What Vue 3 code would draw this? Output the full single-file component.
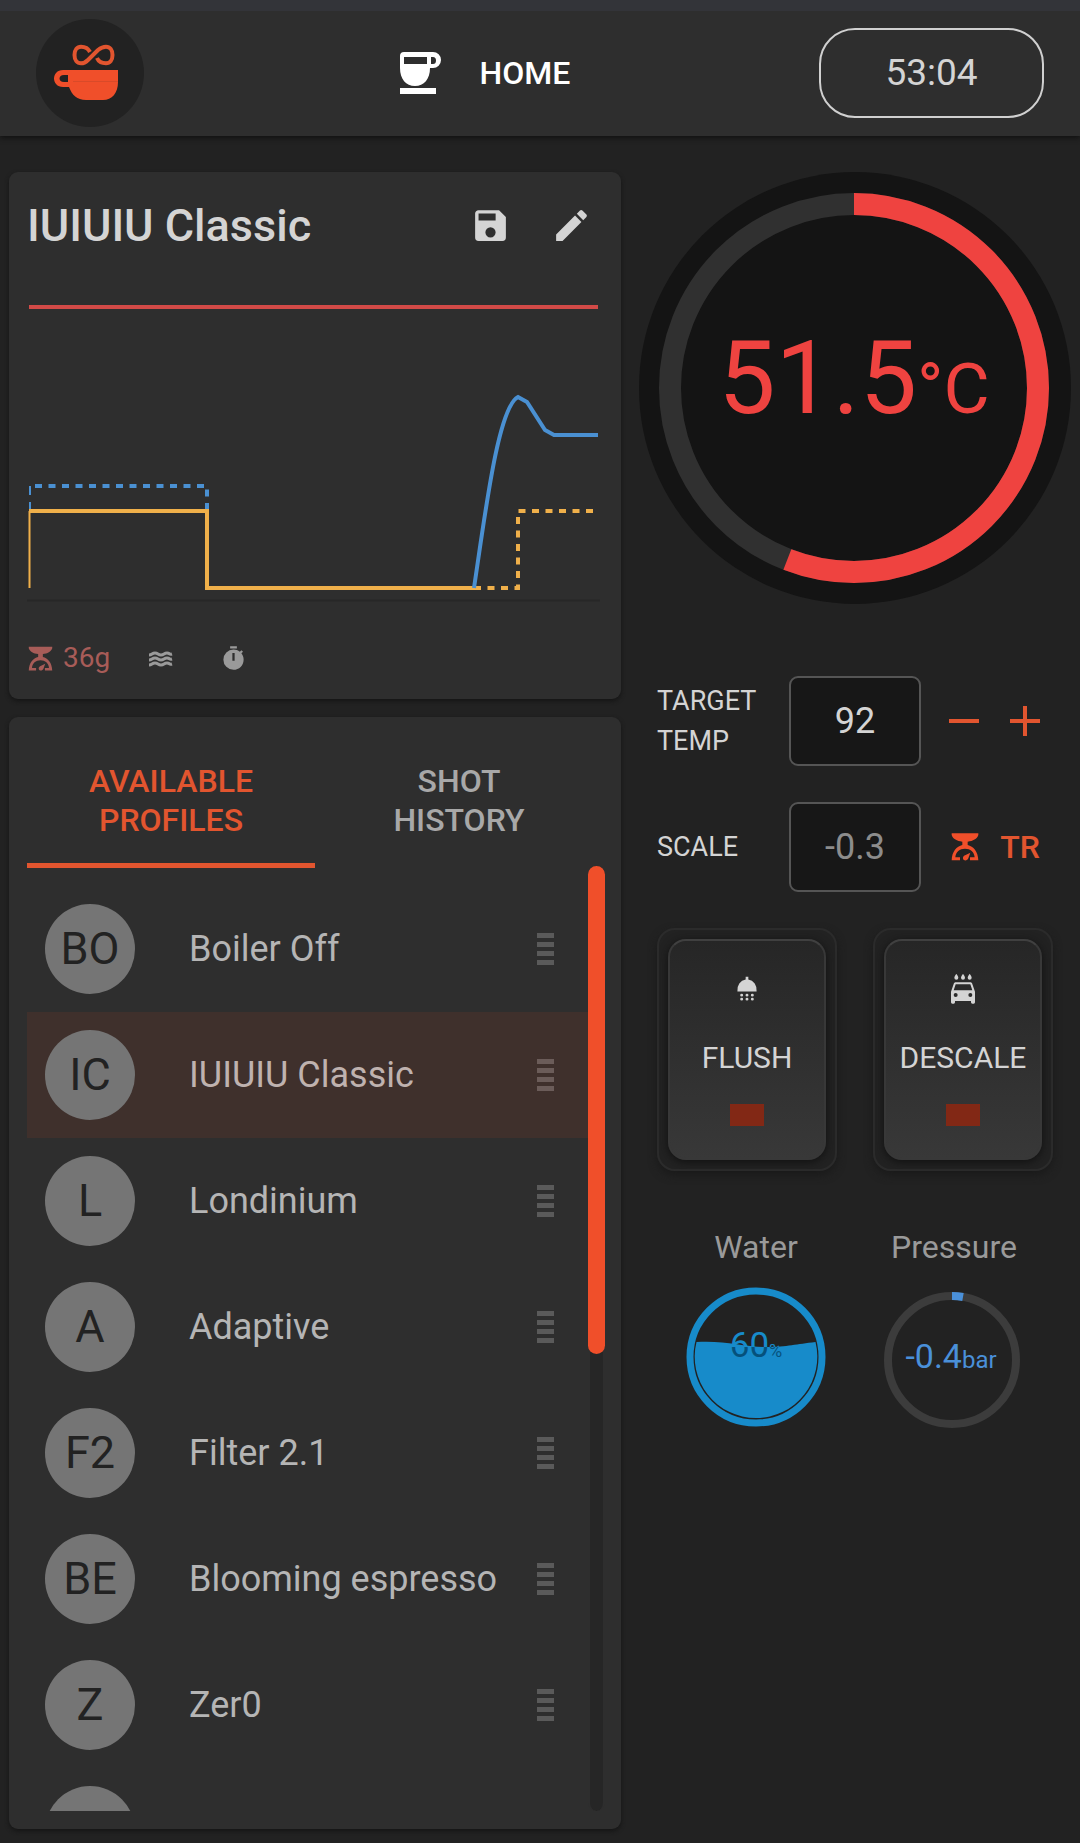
<script setup>
import { ref } from 'vue'

const targetTemp = ref(92)
const scaleWeight = ref('-0.3')
const selected = ref('IUIUIU Classic')

const profiles = [
  { initials: 'BO', name: 'Boiler Off' },
  { initials: 'IC', name: 'IUIUIU Classic' },
  { initials: 'L', name: 'Londinium' },
  { initials: 'A', name: 'Adaptive' },
  { initials: 'F2', name: 'Filter 2.1' },
  { initials: 'BE', name: 'Blooming espresso' },
  { initials: 'Z', name: 'Zer0' },
  { initials: '', name: '' }
]

const carWash =
  'M17,5A1.5,1.5 0 0,0 18.5,3.5C18.5,2.5 17,0.8 17,0.8C17,0.8 15.5,2.5 15.5,3.5A1.5,1.5 0 0,0 17,5M12,5A1.5,1.5 0 0,0 13.5,3.5C13.5,2.5 12,0.8 12,0.8C12,0.8 10.5,2.5 10.5,3.5A1.5,1.5 0 0,0 12,5M7,5A1.5,1.5 0 0,0 8.5,3.5C8.5,2.5 7,0.8 7,0.8C7,0.8 5.5,2.5 5.5,3.5A1.5,1.5 0 0,0 7,5M18.92,8C18.72,7.42 18.16,7 17.5,7H6.5C5.84,7 5.29,7.42 5.08,8L3,14V22A1,1 0 0,0 4,23H5A1,1 0 0,0 6,22V21H18V22A1,1 0 0,0 19,23H20A1,1 0 0,0 21,22V14L18.92,8M6.5,18A1.5,1.5 0 0,1 5,16.5A1.5,1.5 0 0,1 6.5,15A1.5,1.5 0 0,1 8,16.5A1.5,1.5 0 0,1 6.5,18M17.5,18A1.5,1.5 0 0,1 16,16.5A1.5,1.5 0 0,1 17.5,15A1.5,1.5 0 0,1 19,16.5A1.5,1.5 0 0,1 17.5,18M5,13L6.5,8.5H17.5L19,13H5Z'
const showerHead =
  'M11,2.8H13V4.8A7.2,8 0 0 1 19.2,13.8H4.8A7.2,8 0 0 1 11,4.8ZM6.9,16.6a1.1,1.1 0 1 0 2.2,0a1.1,1.1 0 1 0 -2.2,0M10.9,16.6a1.1,1.1 0 1 0 2.2,0a1.1,1.1 0 1 0 -2.2,0M14.9,16.6a1.1,1.1 0 1 0 2.2,0a1.1,1.1 0 1 0 -2.2,0M6.9,19.6a1.1,1.1 0 1 0 2.2,0a1.1,1.1 0 1 0 -2.2,0M10.9,19.6a1.1,1.1 0 1 0 2.2,0a1.1,1.1 0 1 0 -2.2,0M14.9,19.6a1.1,1.1 0 1 0 2.2,0a1.1,1.1 0 1 0 -2.2,0'
const scaleIcon =
  'M0,0H80V5C76,17 64,23 48,25V35C65,39 79,54 80,81H55V72H69C68,56 56,46 40,46C24,46 12,56 11,72H25V81H0C1,54 15,39 32,35V25C16,23 4,17 0,5ZM56,58L50,75C47,83 36,83 34,76C33,70 37,67 42,65Z'

const actions = [
  { label: 'FLUSH', icon: showerHead },
  { label: 'DESCALE', icon: carWash }
]
</script>

<template>
  <div class="page">
    <header class="bar">
      <div class="logo">
        <svg viewBox="0 0 108 108" aria-hidden="true">
          <path d="M54 33C52 29 48 27.700 45 27.700C41 27.700 38.500 31 38.500 36S41 44.300 45 44.300C48 44.300 50 43 52 41L62 31C64.500 29 67 27.700 70 27.700C74 27.700 76.500 31 76.500 36S74 44.300 70 44.300C66 44.300 62.500 42.500 61 39" fill="none" stroke="#e2552f" stroke-width="4" />
          <path fill="#f04f2a" fill-rule="evenodd" d="M27 51H82V63C82 74 76 81 67 81H50C41 81 36 76 33 68H27C15 68 15 51 27 51ZM28 56C22 56 22 63 28 63H32V56Z" />
          <path d="M37 62.500H82" stroke="#d94a29" stroke-width="1" />
        </svg>
      </div>
      <a class="home" href="#home">
        <svg viewBox="0 0 45 45" aria-hidden="true">
          <path fill="#fff" fill-rule="evenodd" d="M7 1H36A8 8 0 0 1 36 17H33C33 28 27 35 18 35S3 28 3 17V5Q3 1 7 1ZM7 6V13H30V6ZM34 6V13H36Q39 13 39 9.500T36 6Z" />
          <path fill="#fff" d="M3 37H39V43H3Z" />
        </svg>
        <span>HOME</span>
      </a>
      <div class="clock" role="timer">53:04</div>
    </header>

    <main class="columns">
      <div class="left">
        <section class="card profile">
          <div class="profile-head">
            <h1>IUIUIU Classic</h1>
            <button class="icon-button" aria-label="Save">
              <svg viewBox="0 0 24 24"><path d="M15,9H5V5H15M12,19A3,3 0 0,1 9,16A3,3 0 0,1 12,13A3,3 0 0,1 15,16A3,3 0 0,1 12,19M17,3H5C3.89,3 3,3.9 3,5V19A2,2 0 0,0 5,21H19A2,2 0 0,0 21,19V7L17,3Z" /></svg>
            </button>
            <button class="icon-button" aria-label="Edit">
              <svg viewBox="0 0 24 24"><path d="M20.71,7.04C21.1,6.65 21.1,6 20.71,5.63L18.37,3.29C18,2.9 17.35,2.9 16.96,3.29L15.12,5.12L18.87,8.87M3,17.25V21H6.75L17.81,9.93L14.06,6.18L3,17.25Z" /></svg>
            </button>
          </div>
          <svg class="chart" viewBox="0 0 576 340" aria-hidden="true">
            <g fill="none" stroke-width="4">
              <path d="M0 330.500H573" stroke="#272727" stroke-width="2" />
              <path d="M2 37H571" stroke="#d24a47" />
              <path d="M3 241V216" stroke="#4a90d2" stroke-width="2" stroke-dasharray="9 7" />
              <path d="M8 216H180V241" stroke="#4a90d2" stroke-dasharray="7 6.500" />
              <path d="M447 318H491V241H568" stroke="#f0b04a" stroke-dasharray="7 6.500" />
              <path d="M2.500 318V241" stroke="#f0b04a" stroke-width="2" />
              <path d="M2 241H180V318H449" stroke="#f0b04a" />
              <path d="M447 318C458 245 471 137 491 127L500 132L518 160L527 165H571" stroke="#4a90d2" />
            </g>
          </svg>
          <ul class="stops">
            <li class="weight">
              <svg viewBox="-6 -6 92 92" aria-hidden="true"><path :d="scaleIcon" /></svg>
              <span>36g</span>
            </li>
            <li>
              <svg viewBox="0 0 27 27" aria-hidden="true">
                <path v-for="y in [9, 14, 19]" :key="y" :d="`M2 ${y + 1}C5 ${y + 1} 5 ${y - 1} 8 ${y - 1}S11 ${y + 1} 14 ${y + 1}S17 ${y - 1} 20 ${y - 1}S22 ${y + 1} 25 ${y}`" fill="none" stroke="#9a9a9a" stroke-width="3" />
              </svg>
            </li>
            <li>
              <svg viewBox="0 0 24 24" aria-hidden="true"><path d="M19.03 7.39L20.45 5.97C20 5.46 19.55 5 19.04 4.56L17.62 6C16.07 4.74 14.12 4 12 4A9 9 0 0 0 3 13A9 9 0 0 0 12 22C17 22 21 17.97 21 13C21 10.88 20.26 8.93 19.03 7.39M13 14H11V7H13V14M15 1H9V3H15V1Z" /></svg>
            </li>
          </ul>
        </section>

        <section class="card browser">
          <div class="tabs" role="tablist">
            <button class="tab active" role="tab" aria-selected="true">AVAILABLE<br />PROFILES</button>
            <button class="tab" role="tab" aria-selected="false">SHOT<br />HISTORY</button>
          </div>
          <div class="scroller">
            <ul class="list">
              <li v-for="p in profiles" :key="p.name" :class="{ selected: p.name === selected }">
                <button class="row" @click="selected = p.name">
                  <span class="avatar">{{ p.initials }}</span>
                  <span class="name">{{ p.name }}</span>
                  <span class="grip"></span>
                </button>
              </li>
            </ul>
            <div class="track"><div class="thumb"></div></div>
          </div>
        </section>
      </div>

      <div class="right">
        <svg class="gauge" viewBox="0 0 432 432" role="img" aria-label="Temperature">
          <circle cx="216" cy="216" r="216" fill="#141414" />
          <circle cx="215" cy="216" r="184" fill="none" stroke="#303030" stroke-width="22" />
          <circle cx="215" cy="216" r="184" fill="none" stroke="#ef4340" stroke-width="22" pathLength="1000" stroke-dasharray="559 441" transform="rotate(-90 215 216)" />
          <text x="215" y="241" text-anchor="middle" font-size="102" fill="#ef4340">51.5<tspan font-size="71">°C</tspan></text>
        </svg>

        <div class="controls">
          <div class="control">
            <label for="target">TARGET TEMP</label>
            <input id="target" v-model="targetTemp" type="text" />
            <div class="buttons">
              <button aria-label="Decrease" @click="targetTemp--">
                <svg viewBox="0 0 30 30"><path d="M0 15H30" stroke="currentColor" stroke-width="4" /></svg>
              </button>
              <button aria-label="Increase" @click="targetTemp++">
                <svg viewBox="0 0 30 30"><path d="M0 15H30M15 0V30" stroke="currentColor" stroke-width="4" /></svg>
              </button>
            </div>
          </div>
          <div class="control">
            <label for="scale">SCALE</label>
            <input id="scale" class="dim" v-model="scaleWeight" type="text" readonly />
            <div class="buttons">
              <button aria-label="Scale">
                <svg viewBox="-8 -4 90 90"><path :d="scaleIcon" fill="#f04f2a" /></svg>
              </button>
              <button>TR</button>
            </div>
          </div>
        </div>

        <div class="switches">
          <div v-for="a in actions" :key="a.label" class="frame">
            <button class="switch">
              <svg viewBox="0 0 24 24" aria-hidden="true"><path :d="a.icon" /></svg>
              <span>{{ a.label }}</span>
              <i class="led"></i>
            </button>
          </div>
        </div>

        <div class="meters">
          <figure>
            <figcaption>Water</figcaption>
            <svg viewBox="0 0 144 144" role="img" aria-label="Water level">
              <defs>
                <linearGradient id="level" gradientUnits="userSpaceOnUse" x1="0" y1="0" x2="0" y2="144">
                  <stop offset="0.422" stop-color="#178bca" />
                  <stop offset="0.422" stop-color="#05517c" />
                </linearGradient>
              </defs>
              <circle cx="72" cy="71" r="66" fill="none" stroke="#178bca" stroke-width="7" />
              <path d="M12.500 56C40 54 60 61 82 61S112 58 131.500 56A61.300 61.300 0 1 1 12.500 56Z" fill="#178bca" />
              <text x="72" y="71" text-anchor="middle" font-size="35" fill="url(#level)">60<tspan font-size="18">%</tspan></text>
            </svg>
          </figure>
          <figure>
            <figcaption>Pressure</figcaption>
            <svg viewBox="0 0 144 144" role="img" aria-label="Pressure">
              <circle cx="70" cy="74" r="64" fill="none" stroke="#3c3c3c" stroke-width="8" />
              <path d="M70 10A64 64 0 0 1 81 11" fill="none" stroke="#4a90d9" stroke-width="8" />
              <text x="69" y="82" text-anchor="middle" font-size="34" fill="#4a90d9">-0.4<tspan font-size="24">bar</tspan></text>
            </svg>
          </figure>
        </div>
      </div>
    </main>
  </div>
</template>

<style>
body {
  margin: 0;
  background: #222;
}
</style>

<style scoped>
* {
  box-sizing: border-box;
}
.page {
  display: flex;
  flex-direction: column;
  height: 100vh;
  background: #222;
  color: #d4d4d4;
  font-family: Roboto, "Liberation Sans", sans-serif;
}
svg {
  display: block;
  fill: currentColor;
}
button {
  padding: 0;
  border: 0;
  background: none;
  color: inherit;
  font: inherit;
}
ul {
  margin: 0;
  padding: 0;
  list-style: none;
}
.bar {
  display: flex;
  justify-content: space-between;
  align-items: center;
  padding: 8px 36px 9px;
  border-top: 11px solid #333439;
  background: #2e2e2e;
  box-shadow: 0 2px 5px #111;
}
.logo {
  width: 108px;
  border-radius: 50%;
  background: #222;
}
.home {
  display: flex;
  align-items: center;
  gap: 38px;
  padding-left: 4px;
  color: #fff;
  font-size: 32px;
  font-weight: 500;
  text-decoration: none;
}
.home svg {
  width: 45px;
}
.clock {
  width: 225px;
  border: 2px solid #d0d0d0;
  border-radius: 36px;
  font-size: 37px;
  line-height: 86px;
  text-align: center;
}
.columns {
  display: grid;
  flex: 1;
  grid-template-columns: 7fr 5fr;
  min-height: 0;
  padding: 36px 0 14px;
}
.left {
  display: flex;
  flex-direction: column;
  gap: 18px;
  min-height: 0;
  padding: 0 9px;
}
.card {
  border-radius: 9px;
  background: #2e2e2e;
  box-shadow: 0 2px 4px #141414;
}
.profile-head {
  display: flex;
  align-items: center;
  padding: 13px 9px 4px 18px;
}
h1 {
  flex: 1;
  margin: 0;
  font-size: 45px;
  font-weight: 500;
}
.icon-button {
  display: grid;
  place-items: center;
  width: 81px;
  height: 81px;
}
.icon-button svg {
  width: 41px;
}
.chart {
  width: 100%;
  padding: 0 18px;
}
.stops {
  display: flex;
  gap: 37px;
  padding: 30px 18px 23px;
  color: #9a9a9a;
  font-size: 28px;
  line-height: 36px;
}
.stops li {
  display: flex;
  align-items: center;
  gap: 9px;
}
.stops li::after {
  content: "";
}
.stops .weight::after {
  content: none;
}
.stops svg {
  width: 27px;
}
.weight {
  color: #a85c58;
}
.browser {
  display: flex;
  flex: 1;
  flex-direction: column;
  min-height: 0;
  padding: 18px;
}
.tabs {
  display: grid;
  grid-template-columns: 1fr 1fr;
}
.tab {
  height: 133px;
  padding-top: 4px;
  border-bottom: 5px solid transparent;
  color: #a8a8a8;
  font-size: 32px;
  font-weight: 500;
  line-height: 39px;
}
.tab.active {
  border-color: #e2552f;
  color: #e2552f;
}
.scroller {
  display: flex;
  flex: 1;
  min-height: 0;
  margin: -2px -2px 0 0;
}
.list {
  flex: 1;
  overflow: hidden;
  padding-top: 20px;
}
.row {
  display: flex;
  align-items: center;
  width: 100%;
  height: 126px;
  padding: 0 34px 0 18px;
  color: #b5b5b5;
  font-size: 36px;
}
.selected {
  background: #3f302c;
}
.selected .row {
  color: #bfb2af;
}
.avatar {
  width: 90px;
  height: 90px;
  margin-right: 54px;
  border-radius: 50%;
  background: #757575;
  color: #222;
  font-size: 45px;
  line-height: 90px;
}
.name {
  flex: 1;
  text-align: left;
}
.grip {
  width: 17px;
  height: 32px;
  background: repeating-linear-gradient(#5a5a5a 0 5px, transparent 5px 9px);
}
.selected .grip {
  background: repeating-linear-gradient(#6b5c59 0 5px, transparent 5px 9px);
}
.track {
  width: 17px;
  border: solid #2e2e2e;
  border-width: 0 2px;
  border-radius: 9px;
  background: #262626;
}
.thumb {
  height: 51.6%;
  margin: 0 -2px;
  border-radius: 9px;
  background: #f04f2a;
}
.right {
  padding: 0 27px;
}
.gauge {
  width: calc(100% + 36px);
  margin: 0 -18px 72px;
}
.controls {
  display: grid;
  gap: 36px;
}
.control {
  display: grid;
  grid-template-columns: 1fr 1fr 1fr;
  align-items: center;
  font-size: 27px;
  line-height: 40px;
}
.control input {
  width: 100%;
  height: 90px;
  padding: 0;
  border: 2px solid #555;
  border-radius: 9px;
  background: #171717;
  color: #d4d4d4;
  font: inherit;
  font-size: 36px;
  text-align: center;
}
.control input.dim {
  color: #8c8c8c;
}
.buttons {
  display: flex;
  justify-content: space-between;
  padding: 0 13px 0 28px;
  color: #e2552f;
  font-size: 32px;
  font-weight: 500;
}
.buttons button {
  display: grid;
  place-items: center;
  min-width: 30px;
}
.buttons svg {
  width: 30px;
}
.switches {
  display: grid;
  grid-template-columns: 1fr 1fr;
  gap: 36px;
  margin-top: 36px;
}
.frame {
  padding: 9px;
  border: 2px solid #2b2b2b;
  border-radius: 18px;
  box-shadow: 0 4px 9px #1a1a1a;
}
.switch {
  display: flex;
  flex-direction: column;
  align-items: center;
  width: 100%;
  height: 221px;
  padding-top: 32px;
  border: 2px solid #383838;
  border-top-color: #404040;
  border-radius: 18px;
  background: linear-gradient(#262626, #383838);
  box-shadow: 0 2px 9px #111;
  font-size: 30px;
  line-height: 40px;
}
.switch svg {
  width: 32px;
  margin-bottom: 33px;
}
.led {
  width: 34px;
  height: 22px;
  margin-top: 26px;
  background: #822815;
}
.meters {
  display: grid;
  grid-template-columns: 1fr 1fr;
  margin-top: 54px;
  color: #9a9a9a;
  font-size: 32px;
  line-height: 45px;
  text-align: center;
}
figure {
  margin: 0;
}
.meters svg {
  width: 144px;
  margin: 16px auto 0;
}
</style>
